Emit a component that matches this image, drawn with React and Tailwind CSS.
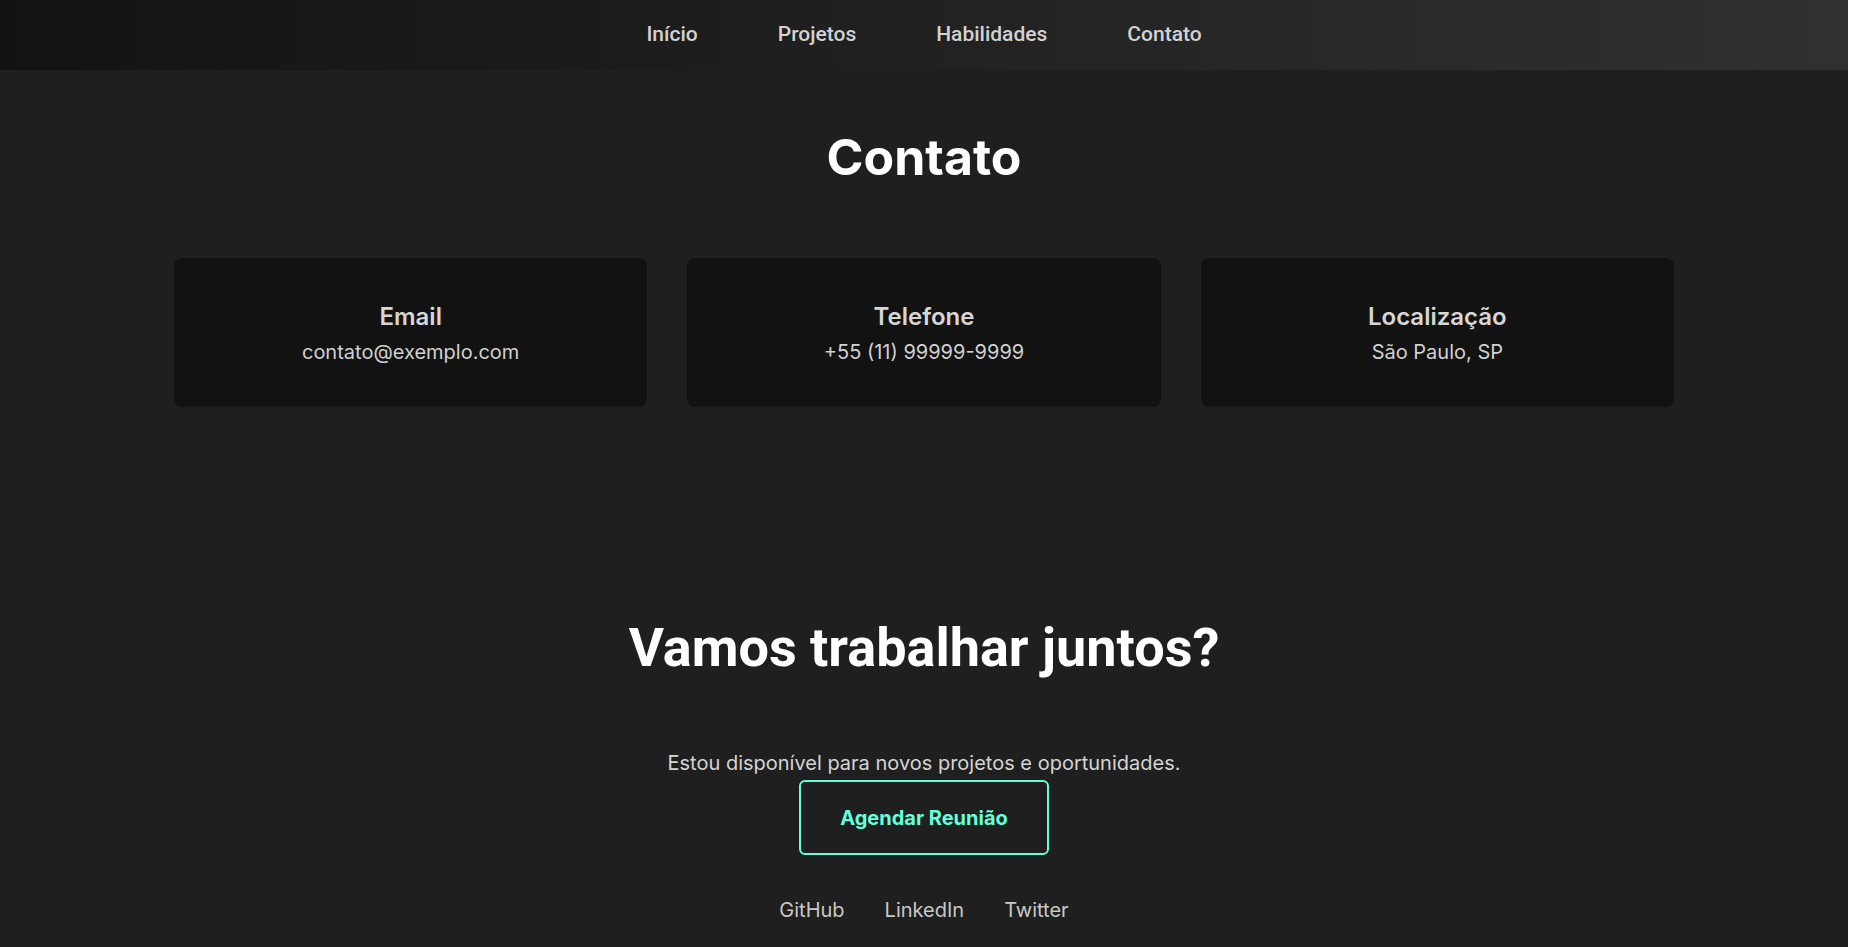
import React from "react";

const links = [
  { id: "inicio", label: "Início" },
  { id: "projetos", label: "Projetos" },
  { id: "habilidades", label: "Habilidades" },
  { id: "contato", label: "Contato" },
];

const contacts = [
  { title: "Email", value: "contato@exemplo.com" },
  { title: "Telefone", value: "+55 (11) 99999-9999" },
  { title: "Localização", value: "São Paulo, SP" },
];

const Navbar = () => (
  <nav className="sticky top-0 z-50 h-[70px] bg-gradient-to-r from-[#121212] to-[#313131]">
    <ul className="flex h-full items-center justify-center gap-20">
      {links.map((l) => (
        <li key={l.id}>
          <a
            href={`#${l.id}`}
            className="font-['Roboto',sans-serif] text-[21px] font-medium text-[#d2d2d2] hover:text-white"
          >
            {l.label}
          </a>
        </li>
      ))}
    </ul>
  </nav>
);

const App = () => {
  return (
    <div className="flex h-screen bg-white">
      <div className="h-screen flex-1 overflow-y-auto bg-[#1f1f1f] font-['Inter',sans-serif] text-white">
        <Navbar />

        {/* Contato */}
        <section id="contato" className="px-[174px] pt-[62px]">
          <h2 className="text-center text-[50px] font-bold leading-none">Contato</h2>
          <div className="mx-auto mt-[76px] grid max-w-[1500px] grid-cols-3 gap-10">
            {contacts.map((c) => (
              <div key={c.title} className="rounded-lg bg-[#121212] pt-[43px] pb-[41px] text-center">
                <h3 className="mb-[5px] text-2xl font-semibold text-[#d6d6d6]">{c.title}</h3>
                <p className="text-xl leading-7 text-[#d0d0d0]">{c.value}</p>
              </div>
            ))}
          </div>
        </section>

        {/* CTA */}
        <footer className="flex flex-col items-center pt-[214px] pb-[23px]">
          <h2 className="font-['Roboto',sans-serif] text-[54px] font-bold leading-none">
            Vamos trabalhar juntos?
          </h2>
          <p className="mt-[74px] text-xl leading-7 text-[#d4d4d4]">
            Estou disponível para novos projetos e oportunidades.
          </p>
          <button className="mt-[3px] h-[75px] w-[250px] rounded-md border-2 border-[#64ffda] text-xl font-bold text-[#64ffda] hover:bg-[#64ffda]/10">
            Agendar Reunião
          </button>
          <div className="mt-[41px] flex gap-10 text-xl leading-7 text-[#c8c8c8]">
            <a href="#">GitHub</a>
            <a href="#">LinkedIn</a>
            <a href="#">Twitter</a>
          </div>
        </footer>
      </div>
      {/* scrollbar gutter */}
      <div className="w-[17px] shrink-0 bg-white" />
    </div>
  );
};

export default App;
